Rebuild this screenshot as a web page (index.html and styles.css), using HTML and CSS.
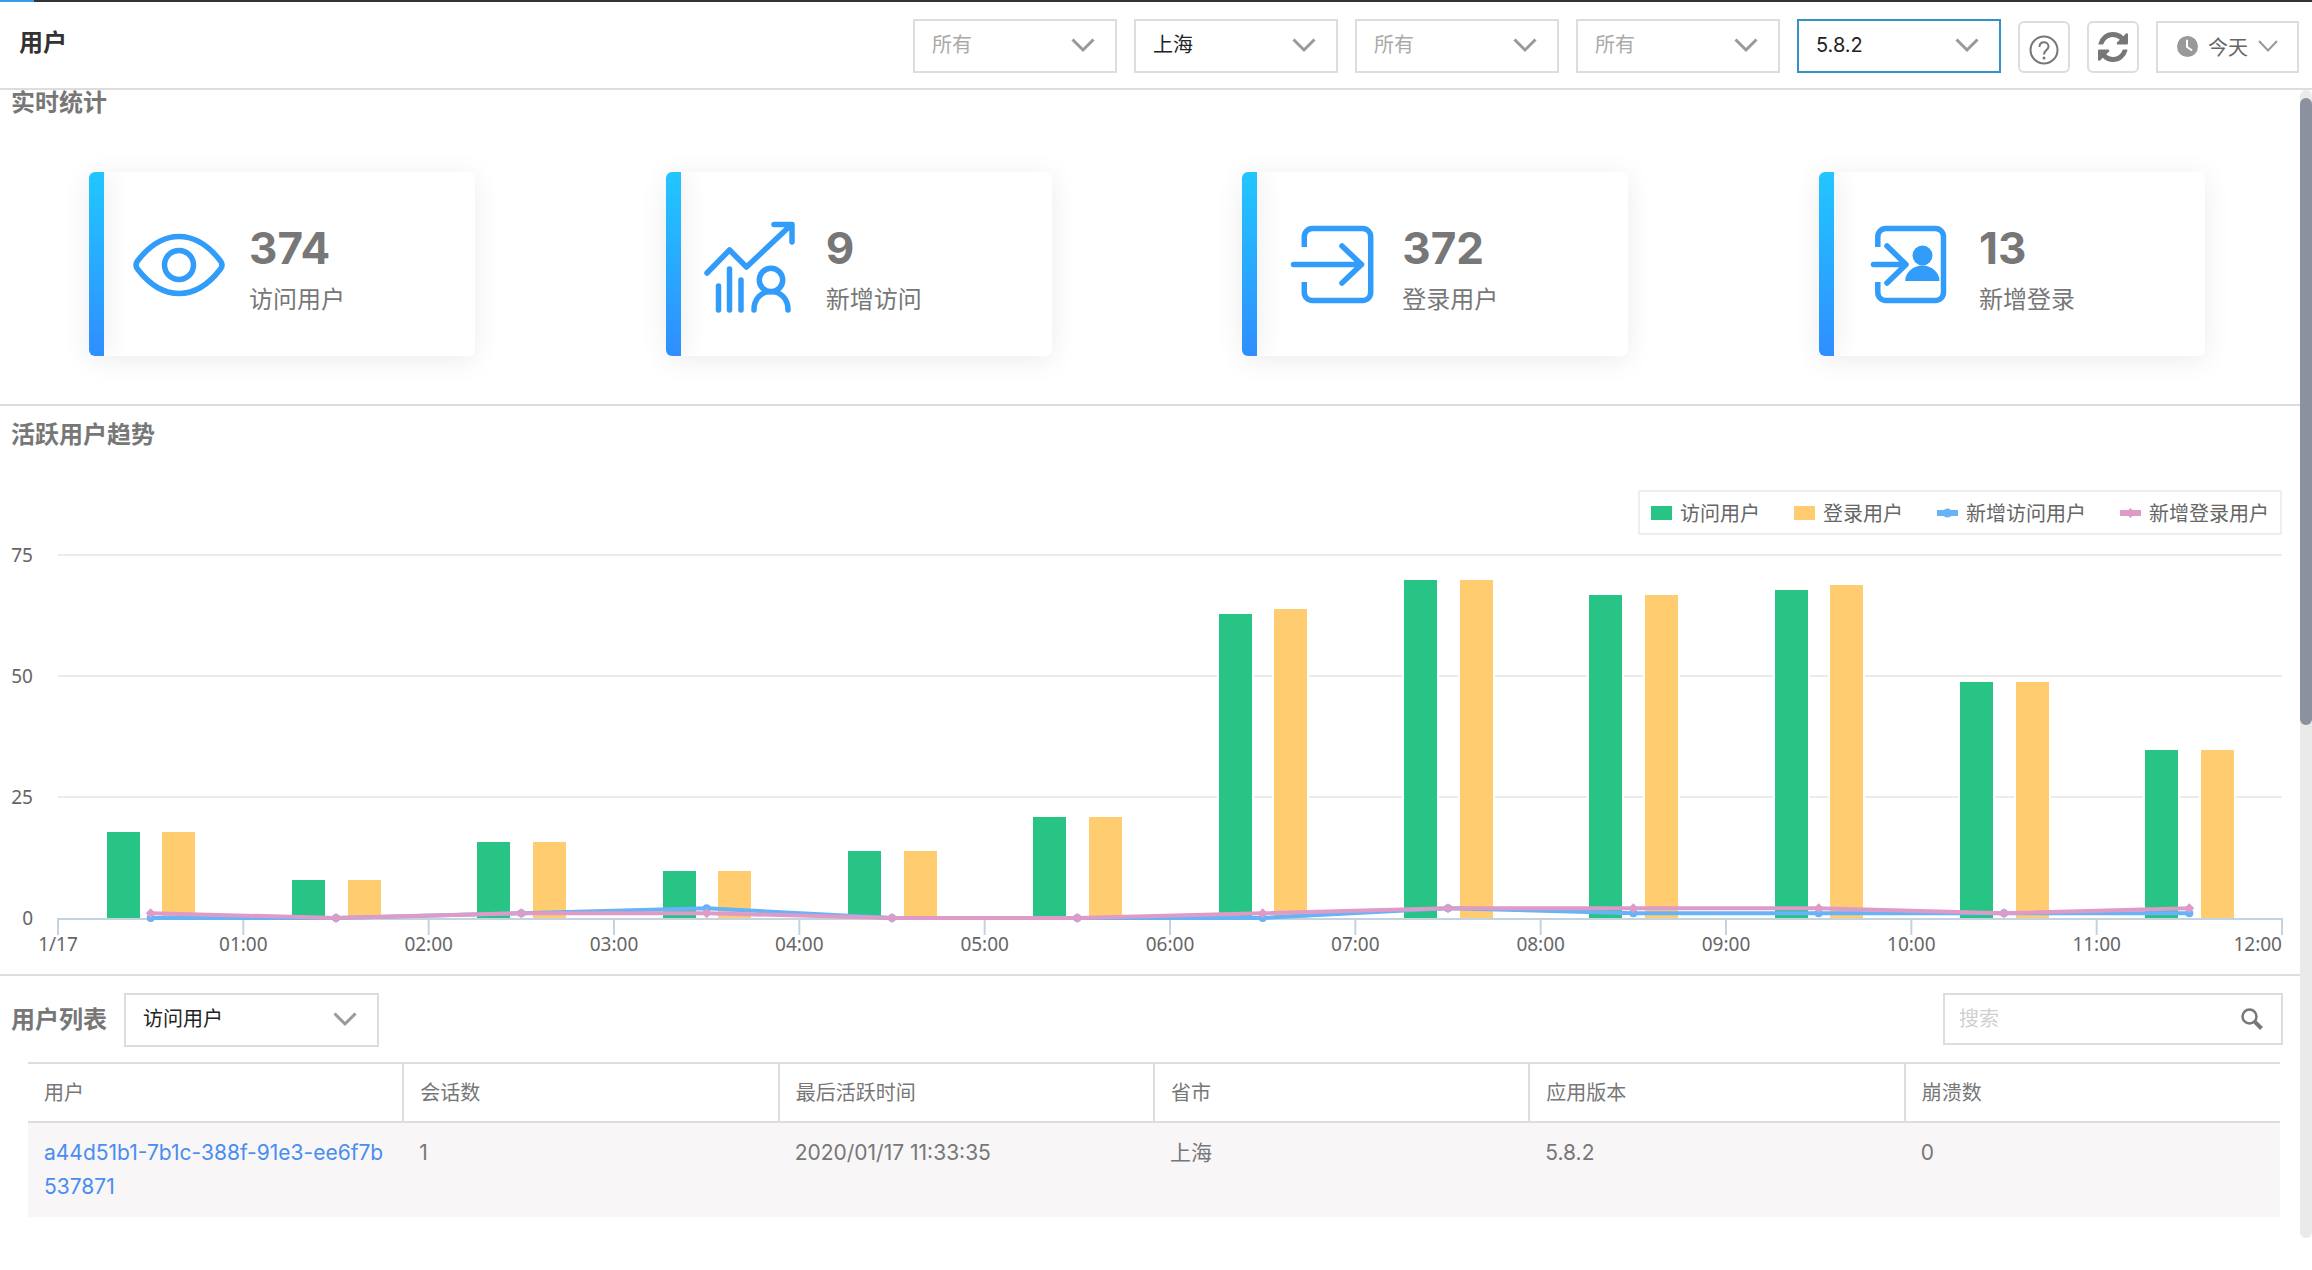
FILE: index.html
```
<!DOCTYPE html>
<html lang="zh-CN">
  <head>
    <meta charset="utf-8" />
    <title>用户</title>
    <link rel="stylesheet" href="styles.css">
  </head>

  <body>
    <div class="progress"><div class="progress-bar"></div></div>

    <header class="page-header">
      <h1>用户</h1>
      <form class="filters">
        <select class="select placeholder" aria-label="应用">
          <option>所有</option>
        </select>
        <select class="select" aria-label="省市">
          <option>上海</option>
        </select>
        <select class="select placeholder" aria-label="运营商">
          <option>所有</option>
        </select>
        <select class="select placeholder" aria-label="渠道">
          <option>所有</option>
        </select>
        <select class="select active" aria-label="版本">
          <option>5.8.2</option>
        </select>
        <button type="button" class="icon-button help" aria-label="帮助">
          <svg width="30" height="30" viewBox="0 0 30 30" fill="none" stroke="#777" stroke-width="2">
            <circle cx="15" cy="15" r="13.5" />
            <path d="M10.5 12c0-3 2-4.700 4.500-4.700s4.500 1.700 4.500 4.200c0 3.500-4.500 3.500-4.500 8" />
            <circle cx="15" cy="23" r="1.500" fill="#777" stroke="none" />
          </svg>
        </button>
        <button type="button" class="icon-button" aria-label="刷新">
          <svg width="30" height="30" viewBox="0 0 1536 1536" fill="#777">
            <path d="M1511 928q0 5-1 7-64 268-268 434.500T764 1536q-146 0-282.500-55T238 1324l-129 129q-19 19-45 19t-45-19-19-45V960q0-26 19-45t45-19h448q26 0 45 19t19 45-19 45l-137 137q71 66 161 102t187 36q134 0 250-65t186-179q11-17 53-117 8-23 30-23h192q13 0 22.500 9.500t9.500 22.500zm25-800v448q0 26-19 45t-45 19h-448q-26 0-45-19t-19-45 19-45l138-138Q969 256 768 256q-134 0-250 65T332 500q-11 17-53 117-8 23-30 23H50q-13 0-22.500-9.500T18 608v-7q65-268 270-434.500T768 0q146 0 284 55.500T1297 212l130-129q19-19 45-19t45 19 19 45z" />
          </svg>
        </button>
        <button type="button" class="date-button">
          <svg width="21" height="21" viewBox="0 0 21 21">
            <circle cx="10.500" cy="10.500" r="10.500" fill="#999" />
            <path d="M10 4.500V11l4.500 3" fill="none" stroke="#fff" stroke-width="2" stroke-linecap="round" />
          </svg>
          <span>今天</span>
          <svg width="20" height="12" viewBox="0 0 20 12" fill="none" stroke="#999" stroke-width="2">
            <path d="M1 1l9 9.500L19 1" />
          </svg>
        </button>
      </form>
    </header>

    <div class="page-body">
      <main>
        <section class="realtime">
          <h2>实时统计</h2>
          <div class="cards">
            <div class="card">
              <svg class="card-icon" viewBox="0 0 100 100">
                <path d="M8.500 47C20 32 34 22.500 50 22.500S80 32 91.500 47q3 4 0 8C80 70 66 79.500 50 79.500S20 70 8.500 55q-3-4 0-8z" />
                <circle cx="50" cy="51" r="14.500" />
              </svg>
              <div class="card-text">
                <strong>374</strong>
                <span>访问用户</span>
              </div>
            </div>
            <div class="card">
              <svg class="card-icon" viewBox="0 0 100 100">
                <path d="M1 59l22.500-23 17 17L85 11M68 10.500h18V28" />
                <path d="M12.500 72v24M23.500 55v41M35 66v30" />
                <circle cx="65" cy="66" r="11.700" />
                <path d="M48 96c0-11 7-18.500 17-18.500S82 85 82 96" />
              </svg>
              <div class="card-text">
                <strong>9</strong>
                <span>新增访问</span>
              </div>
            </div>
            <div class="card">
              <svg class="card-icon" viewBox="0 0 100 100">
                <path class="butt" d="M22.300 33v-10.500a8 8 0 0 1 8-8h50.400a8 8 0 0 1 8 8v56a8 8 0 0 1-8 8H30.300a8 8 0 0 1-8-8V68" />
                <path d="M11.500 50.500h68M60 32l19.500 18.500L60 69" />
              </svg>
              <div class="card-text">
                <strong>372</strong>
                <span>登录用户</span>
              </div>
            </div>
            <div class="card">
              <svg class="card-icon" viewBox="0 0 100 100">
                <path class="butt" d="M18.800 33v-10.500a8 8 0 0 1 8-8h49.700a8 8 0 0 1 8 8v56a8 8 0 0 1-8 8H26.800a8 8 0 0 1-8-8V68" />
                <path d="M14.500 50.500h32M28 32l19 18.500L28 69" />
                <circle class="solid" cx="63.500" cy="41.500" r="10" />
                <path class="solid" d="M46.200 67c0-9 8.300-15.500 17.200-15.500S80.500 58 80.500 67z" />
              </svg>
              <div class="card-text">
                <strong>13</strong>
                <span>新增登录</span>
              </div>
            </div>
          </div>
        </section>

        <section class="trend">
          <h2>活跃用户趋势</h2>
          <ul class="legend">
            <li><i class="mark green"></i>访问用户</li>
            <li><i class="mark orange"></i>登录用户</li>
            <li>
              <svg class="mark-line" viewBox="0 0 21 14" fill="#67b3f8">
                <rect y="4" width="21" height="6" /><circle cx="10.500" cy="7" r="4.500" />
              </svg>新增访问用户
            </li>
            <li>
              <svg class="mark-line" viewBox="0 0 21 14" fill="#de9bc8">
                <rect y="4" width="21" height="6" /><path d="M10.500 2l5 5-5 5-5-5z" />
              </svg>新增登录用户
            </li>
          </ul>
          <svg id="trend-chart"></svg>
        </section>

        <section class="users">
          <div class="users-bar">
            <h2>用户列表</h2>
            <select class="select wide" aria-label="用户类型">
              <option>访问用户</option>
            </select>
            <label class="search">
              <input type="text" placeholder="搜索" aria-label="搜索" />
              <svg width="22" height="22" viewBox="0 0 22 22" fill="none" stroke="#777">
                <circle cx="8.500" cy="8.500" r="7" stroke-width="2.500" />
                <path d="M14 14l6.500 6.500" stroke-width="4" />
              </svg>
            </label>
          </div>
          <table>
            <thead>
              <tr>
                <th>用户</th>
                <th>会话数</th>
                <th>最后活跃时间</th>
                <th>省市</th>
                <th>应用版本</th>
                <th>崩溃数</th>
              </tr>
            </thead>
            <tbody>
              <tr>
                <td><a href="#">a44d51b1-7b1c-388f-91e3-ee6f7b537871</a></td>
                <td>1</td>
                <td>2020/01/17 11:33:35</td>
                <td>上海</td>
                <td>5.8.2</td>
                <td>0</td>
              </tr>
            </tbody>
          </table>
        </section>
      </main>
      <div class="scroll-track"><div class="scroll-thumb"></div></div>
    </div>

    <script src="chart.js"></script>
  </body>
</html>
```
FILE: styles.css
```
* {
  box-sizing: border-box;
}

body {
  display: flex;
  flex-direction: column;
  min-height: 100vh;
  margin: 0;
  background-color: #fff;
  color: #777;
  font-family: Inter, "Noto Sans CJK SC", sans-serif;
  font-size: 20px;
}

h1,
h2 {
  margin: 0;
  font-size: 24px;
  font-weight: bold;
}

h2 {
  line-height: 26px;
}

button,
select,
input {
  font: inherit;
}

.progress {
  height: 2px;
  background-color: #333;
}

.progress-bar {
  width: 34px;
  height: 2px;
  background-color: #3a9be8;
}

/* header */
.page-header {
  display: flex;
  justify-content: space-between;
  padding: 17px 13px 15px 19px;
  border-bottom: 2px solid #ddd;
}

.page-header h1 {
  color: #333;
  line-height: 48px;
}

.filters {
  display: flex;
  align-items: flex-end;
  gap: 17px;
}

.select {
  width: 204px;
  height: 54px;
  padding: 0 48px 2px 17px;
  border: 2px solid #ddd;
  border-radius: 0;
  color: #222;
  background: #fff url("data:image/svg+xml,%3Csvg xmlns='http://www.w3.org/2000/svg' width='24' height='16' fill='none' stroke='%23999' stroke-width='3'%3E%3Cpath d='M1.500 1.500L12 12 22.500 1.500'/%3E%3C/svg%3E") no-repeat right 20px center;
  appearance: none;
}

.select.placeholder {
  color: #aaa;
}

.select.active {
  border-color: #3392c6;
}

.select.wide {
  width: 255px;
}

.icon-button {
  display: flex;
  align-items: center;
  justify-content: center;
  width: 52px;
  height: 52px;
  padding: 0;
  border: 2px solid #ddd;
  border-radius: 6px;
  background-color: #fff;
}

.icon-button.help {
  padding-top: 6px;
}

.date-button {
  display: flex;
  align-items: center;
  gap: 10px;
  height: 52px;
  padding: 0 19px 2px;
  border: 2px solid #ddd;
  background-color: #fff;
  color: #666;
}

.page-body {
  display: flex;
  flex: 1;
  align-items: stretch;
}

main {
  flex: 1;
  min-width: 0;
}

.scroll-track {
  width: 12px;
  margin-bottom: 32px;
  padding-top: 8px;
  border-radius: 6px;
  background-color: #ebeaeb;
}

.scroll-thumb {
  height: 55%;
  border-radius: 6px;
  background-color: #8b919f;
}

/* realtime cards */
.realtime {
  padding-bottom: 48px;
  border-bottom: 2px solid #ddd;
}

.realtime h2,
.trend h2 {
  padding-left: 11px;
}

.cards {
  display: flex;
  justify-content: space-between;
  margin-top: 56px;
  padding: 0 95px 0 89px;
}

.card {
  display: flex;
  align-items: center;
  width: 386px;
  height: 184px;
  border-radius: 6px;
  background-color: #fff;
  box-shadow: 0 4px 28px rgba(0, 0, 0, 0.08);
  overflow: hidden;
}

.card::before {
  content: "";
  align-self: stretch;
  width: 15px;
  background: linear-gradient(#22c6ff, #2f8eff);
  box-shadow: 4px 0 24px rgba(0, 0, 0, 0.08);
}

.card-icon {
  width: 100px;
  height: 100px;
  margin: 0 20px 0 25px;
  overflow: visible;
  fill: none;
  stroke: #319cf9;
  stroke-width: 5.5px;
  stroke-linecap: round;
  stroke-linejoin: round;
}

.card-icon .butt {
  stroke-linecap: butt;
}

.card-icon .solid {
  fill: #319cf9;
  stroke: none;
}

.card-text {
  display: flex;
  flex-direction: column;
  padding-top: 12px;
}

.card-text strong {
  font-size: 44px;
  line-height: 60px;
}

.card-text span {
  font-size: 24px;
  line-height: 44px;
}

/* trend chart */
.trend {
  display: flex;
  flex-direction: column;
  padding-top: 16px;
  border-bottom: 2px solid #ddd;
}

.legend {
  display: flex;
  align-self: flex-end;
  align-items: center;
  gap: 34px;
  height: 45px;
  margin: 42px 18px 0 0;
  padding: 0 11px;
  border: 2px solid #eee;
  color: #666;
  list-style: none;
}

.legend li {
  display: flex;
  align-items: center;
  gap: 8px;
}

.mark {
  width: 21px;
  height: 14px;
}

.mark.green {
  background-color: #27c485;
}

.mark.orange {
  background-color: #ffcd70;
}

.mark-line {
  width: 21px;
  height: 14px;
}

#trend-chart {
  display: block;
  width: 100%;
  height: 439px;
}

#trend-chart text {
  fill: #666;
  font-family: "Noto Sans", sans-serif;
  font-size: 19px;
}

/* user list */
.users-bar {
  display: flex;
  align-items: center;
  gap: 17px;
  padding: 17px 17px 15px 11px;
}

.search {
  display: flex;
  align-items: center;
  align-self: flex-start;
  width: 340px;
  height: 52px;
  margin-left: auto;
  padding-right: 18px;
  border: 2px solid #ddd;
}

.search input {
  flex: 1;
  min-width: 0;
  padding: 0 14px;
  border: none;
  outline: none;
  background: none;
}

.search input::placeholder {
  color: #d0d0d0;
}

table {
  width: calc(100% - 48px);
  margin-left: 28px;
  border-collapse: collapse;
  table-layout: fixed;
}

th,
td {
  line-height: 34px;
  text-align: left;
  vertical-align: top;
  word-break: break-all;
}

th {
  padding: 12px 16px 11px;
  border-top: 2px solid #ddd;
  border-bottom: 2px solid #ddd;
  font-weight: normal;
}

th + th {
  border-left: 2px solid #ddd;
}

td {
  padding: 13px 16px;
  font-size: 21px;
}

tbody tr {
  background-color: #f8f6f7;
}

td a {
  color: #4a8df0;
  text-decoration: none;
}
```
FILE: chart.js
```
const chart = document.getElementById("trend-chart");
const labels = ["1/17", "01:00", "02:00", "03:00", "04:00", "05:00", "06:00", "07:00", "08:00", "09:00", "10:00", "11:00", "12:00"];
const visits = [18, 8, 16, 10, 14, 21, 63, 70, 67, 68, 49, 35];
const logins = [18, 8, 16, 10, 14, 21, 64, 70, 67, 69, 49, 35];
const newVisits = [0, 0, 1, 2, 0, 0, 0, 2, 1, 1, 1, 1];
const newLogins = [1, 0, 1, 1, 0, 0, 1, 2, 2, 2, 1, 2];

function drawChart() {
  const left = 58;
  const right = chart.clientWidth - 18;
  const top = 20;
  const bottom = 383;
  const step = (right - left) / visits.length;
  const y = (value) => bottom - (value * (bottom - top)) / 75;
  let html = "";

  // Grid lines and y axis labels
  [75, 50, 25, 0].forEach((value) => {
    if (value > 0) {
      html += `<path d="M${left} ${y(value)}H${right}" stroke="#ebebeb" stroke-width="2" />`;
    }
    html += `<text x="33" y="${y(value) + 7}" text-anchor="end">${value}</text>`;
  });

  // Bars, the white outline keeps them clear of the grid
  const barWidth = Math.round(step * 0.18);
  visits.forEach((value, i) => {
    const x = left + step * i;
    html += bar(x + step * 0.262, value, "#27c485");
    html += bar(x + step * 0.563, logins[i], "#ffcd70");
  });

  function bar(x, value, color) {
    const barTop = Math.round(y(value)) + 1;
    return `<rect x="${Math.round(x)}" y="${barTop}" width="${barWidth}" height="${bottom - barTop}" fill="${color}" stroke="#fff" stroke-width="4" paint-order="stroke" />`;
  }

  // X axis
  html += `<path d="M${left} ${bottom + 1}H${right}" stroke="#c5d3e0" stroke-width="2" />`;
  labels.forEach((label, i) => {
    const x = left + step * i;
    const last = i === labels.length - 1;
    html += `<path d="M${x} ${bottom}v17" stroke="#c5d3e0" stroke-width="2" />`;
    html += `<text x="${x}" y="${bottom + 33}" text-anchor="${last ? "end" : "middle"}">${label}</text>`;
  });

  // Lines
  const point = (value, i) => [left + step * (i + 0.5), y(value)];
  html += `<polyline points="${newVisits.map(point).join(" ")}" fill="none" stroke="#67b3f8" stroke-width="4" />`;
  newVisits.map(point).forEach(([px, py]) => {
    html += `<circle cx="${px}" cy="${py}" r="4" fill="#67b3f8" />`;
  });
  html += `<polyline points="${newLogins.map(point).join(" ")}" fill="none" stroke="#de9bc8" stroke-width="4" />`;
  newLogins.map(point).forEach(([px, py]) => {
    html += `<path d="M${px} ${py - 5}l5 5-5 5-5-5z" fill="#de9bc8" />`;
  });

  chart.innerHTML = html;
}

drawChart();
window.addEventListener("resize", drawChart);
```
